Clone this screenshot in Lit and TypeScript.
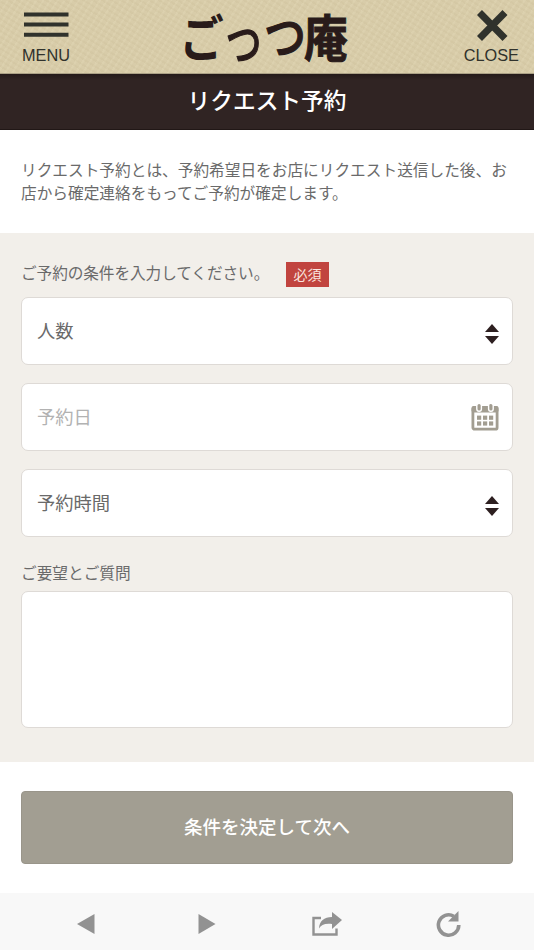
import { LitElement, html, css, svg } from "lit";
import { customElement } from "lit/decorators.js";

const updown = html`<svg class="updown" viewBox="0 0 14 20" width="14" height="20">
  <path d="M7 0 14 8H0zM0 12h14L7 20z" fill="#2d1f20" />
</svg>`;

const calendar = html`<svg class="calendar" viewBox="0 0 28 28" width="28" height="28">
  <rect x="1.9" y="4.5" width="24.2" height="21.7" rx="1.8" fill="#fff" stroke="#a29d91" stroke-width="2.8" />
  <rect x="0.5" y="3" width="27" height="6.5" rx="2" fill="#a29d91" />
  <g fill="#a29d91" stroke="#fff" stroke-width="1.4">
    <rect x="5.8" y="0.2" width="4.6" height="8" rx="2.3" />
    <rect x="17.6" y="0.2" width="4.6" height="8" rx="2.3" />
  </g>
  <g fill="#a29d91">
    ${[12.6, 18.4].map((y) => [6, 12, 18].map((x) => svg`<rect x=${x} y=${y} width="4.2" height="4.2" />`))}
  </g>
</svg>`;

@customElement("app-root")
export class AppRoot extends LitElement {
  static styles = css`
    :host {
      display: flex;
      flex-direction: column;
      width: 534px;
      height: 950px;
      overflow: hidden;
      background: #fff;
      color: #6a6a6a;
      font-family: "Noto Sans CJK JP", sans-serif;
      font-size: 15.68px;
      line-height: 23px;
    }
    * { box-sizing: border-box; }
    svg { display: block; flex: none; }
    p { margin: 0; }
    .header {
      flex: none;
      height: 74px;
      display: flex;
      justify-content: space-between;
      padding: 0 15px 0 22px;
      border-bottom: 1px solid #aaa085;
      background-color: #d8cca9;
      background-image:
        repeating-linear-gradient(32deg, rgba(145, 125, 75, 0.05) 0 1.5px, transparent 2.5px 5px),
        repeating-linear-gradient(122deg, rgba(255, 250, 220, 0.1) 0 1.5px, transparent 2.5px 6px);
    }
    .tool {
      display: flex;
      flex-direction: column;
      align-items: center;
      padding-top: 10px;
      color: #30322c;
      font: 16.3px/20px "Liberation Sans", sans-serif;
    }
    .tool svg { margin-bottom: 5px; }
    .logo { margin-left: 7px; font-weight: 700; fill: #291b1a; stroke: #291b1a; overflow: visible; }
    .title {
      flex: none;
      height: 56px;
      margin: 0;
      padding-bottom: 4px;
      display: flex;
      justify-content: center;
      align-items: center;
      background: linear-gradient(#241a19, #302423 6px);
      border-bottom: 1px solid #211716;
      color: #fff;
      font-size: 22.7px;
      font-weight: 500;
    }
    .intro { height: 103px; padding: 28px 21px 0; white-space: nowrap; flex: none; }
    .form {
      flex: none;
      height: 529px;
      padding: 29px 21px 0;
      background: #f2efea;
      display: flex;
      flex-direction: column;
    }
    .label { display: flex; height: 35px; }
    .label p { margin-top: -1px; letter-spacing: -0.1px; }
    .badge {
      margin-left: 16.7px;
      width: 43px;
      height: 25px;
      background: #c1443f;
      color: #fae5df;
      font-size: 14px;
      line-height: 24px;
      text-align: center;
    }
    .field {
      height: 68px;
      margin-bottom: 18px;
      padding: 0 13px 0 15px;
      border: 1.5px solid #dedad6;
      border-radius: 7px;
      background: #fff;
      display: flex;
      align-items: center;
      justify-content: space-between;
      font-size: 18.3px;
    }
    .field span { padding-bottom: 1px; }
    .updown { margin-top: 6px; }
    .muted { color: #b2b2b2; }
    .calendar { margin-bottom: 1px; }
    .second { margin-top: 6px; height: 30px; }
    .area { height: 137px; border: 1.5px solid #dedad6; border-radius: 7px; background: #fff; }
    .action { flex: none; height: 131px; padding: 29px 21px; }
    .button {
      width: 100%;
      height: 73px;
      padding: 0 0 3px;
      border: 1px solid #99958a;
      border-radius: 4px;
      background: #a29e92;
      color: #fff;
      font: 500 18.5px "Noto Sans CJK JP", sans-serif;
    }
    .footer {
      flex: none;
      height: 57px;
      padding: 5px 25.5px 0;
      background: #f8f8f8;
      display: grid;
      grid-template-columns: repeat(4, 1fr);
      align-items: center;
      justify-items: center;
    }
  `;

  render() {
    return html`
      <header class="header">
        <div class="tool">
          <svg width="48" height="30" viewBox="0 0 48 30">
            <path d="M2 4.5h44.5M2 14.5h44.5M2 24.7h44.5" stroke="#30322c" stroke-width="4" />
          </svg>
          MENU
        </div>
        <svg class="logo" width="170" height="73" viewBox="180 0 170 73">
          <text transform="translate(174.5 57) scale(1.01 1.13)" font-size="44" stroke-width="0">ご</text>
          <text transform="translate(216 58.5) scale(1 1.32)" font-size="44" font-weight="400" stroke-width="0.9">っ</text>
          <text transform="translate(259 55) scale(1 1.18)" font-size="42" font-weight="500" stroke-width="1">つ</text>
          <text transform="translate(299 56.5) scale(.95 1.08)" font-size="46" stroke-width="1">庵</text>
        </svg>
        <div class="tool">
          <svg width="32" height="30" viewBox="0 0 32 30" overflow="visible">
            <path d="M4.5 2.5 30 28.5M30 2.5 4.5 28.5" stroke="#30322c" stroke-width="7" />
          </svg>
          CLOSE
        </div>
      </header>
      <h1 class="title">リクエスト予約</h1>
      <p class="intro">リクエスト予約とは、予約希望日をお店にリクエスト送信した後、お<br />店から確定連絡をもってご予約が確定します。</p>
      <section class="form">
        <div class="label"><p>ご予約の条件を入力してください。</p><span class="badge">必須</span></div>
        <div class="field"><span>人数</span>${updown}</div>
        <div class="field muted"><span>予約日</span>${calendar}</div>
        <div class="field"><span>予約時間</span>${updown}</div>
        <div class="second">ご要望とご質問</div>
        <div class="area"></div>
      </section>
      <div class="action"><button class="button">条件を決定して次へ</button></div>
      <nav class="footer">
        <svg width="18" height="20" viewBox="0 0 18 20"><path d="M17.5 0v20L0 10z" fill="#929292" /></svg>
        <svg width="18" height="20" viewBox="0 0 18 20"><path d="M.5 0v20L17.5 10z" fill="#929292" /></svg>
        <svg width="30" height="24" viewBox="0 0 30 24">
          <path d="M9 6H1.5v16.500h23v-6" fill="none" stroke="#929292" stroke-width="2.4" />
          <path d="M20 0 30 8 20 17v-5C13 11 9 13 7 16.5 7.5 9 12 5 20 5z" fill="#929292" />
        </svg>
        <svg width="25" height="26" viewBox="0 0 25 26">
          <path d="M17.8 5.200A10.200 10.200 0 1 0 22.8 14" fill="none" stroke="#929292" stroke-width="3.6" />
          <path d="M22.5 0v10.500H12z" fill="#929292" />
        </svg>
      </nav>
    `;
  }
}
